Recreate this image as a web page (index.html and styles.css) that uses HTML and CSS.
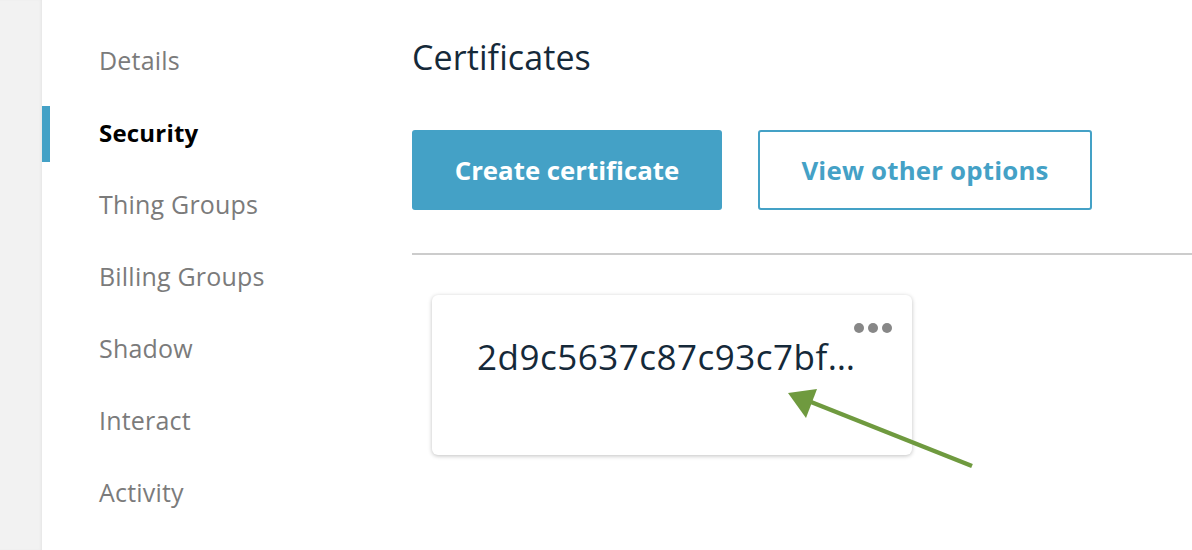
FILE: index.html
```html
<!DOCTYPE html>
<html>
<head>
<meta charset="utf-8">
<link rel="stylesheet" href="styles.css">
</head>
<body>
<div class="page">
  <div class="rail"></div>
  <nav class="nav">
    <a class="nav-item">Details</a>
    <a class="nav-item active">Security</a>
    <a class="nav-item">Thing Groups</a>
    <a class="nav-item">Billing Groups</a>
    <a class="nav-item">Shadow</a>
    <a class="nav-item">Interact</a>
    <a class="nav-item">Activity</a>
  </nav>
  <main class="main">
    <h1 class="title">Certificates</h1>
    <div class="actions">
      <button class="btn btn-primary">Create certificate</button>
      <button class="btn btn-secondary">View other options</button>
    </div>
    <hr class="divider">
    <div class="card">
      <span class="dots"><i></i><i></i><i></i></span>
      <div class="cert-id">2d9c5637c87c93c7bf…</div>
    </div>
  </main>
  <svg class="arrow" width="1192" height="550" viewBox="0 0 1192 550">
    <line x1="972" y1="466" x2="806" y2="400" stroke="#6f9a3f" stroke-width="4.5"/>
    <polygon points="788,393 817,389 806,418" fill="#6f9a3f"/>
  </svg>
</div>
</body>
</html>
```

FILE: styles.css
```css
* { box-sizing: border-box; }
html, body { margin: 0; padding: 0; background: #fff; }
body { font-family: "Open Sans", "Liberation Sans", sans-serif; }
.page { position: relative; display: flex; width: 1192px; height: 550px; overflow: hidden; }
.rail { width: 42px; flex: none; background: #f2f2f2; box-shadow: inset -2px 0 3px -1px rgba(0,0,0,0.06); }
.nav { width: 370px; flex: none; display: flex; flex-direction: column; gap: 16px; padding-top: 34px; }
.nav-item { height: 56px; display: flex; align-items: center; padding: 0 0 4px 49px; border-left: 8px solid transparent; font-size: 25px; color: #7b7b7b; letter-spacing: 0.2px; }
.nav-item.active { border-left-color: #44a1c6; color: #000; font-weight: 700; font-size: 24px; }
.main { flex: 1; display: flex; flex-direction: column; }
.title { margin: 35px 0 0 0; font-size: 34px; font-weight: 400; line-height: 44px; color: #152939; letter-spacing: 0.1px; }
.actions { display: flex; gap: 36px; margin-top: 51px; }
.btn { height: 80px; border-radius: 3px; font-family: inherit; font-size: 25.8px; font-weight: 700; cursor: pointer; letter-spacing: 0; }
.btn-primary { width: 310px; background: #44a1c6; border: none; color: #fff; }
.btn-secondary { width: 334px; background: #fff; border: 2px solid #44a1c6; color: #44a1c6; letter-spacing: 0.2px; }
.divider { margin: 43px 0 0; border: none; border-top: 2px solid #cccccc; width: 100%; }
.card { position: relative; margin: 40px 0 0 20px; width: 480px; height: 160px; background: #fff; border-radius: 6px; box-shadow: 0 1px 4px rgba(0,0,0,0.25); padding: 38px 0 0 45px; }
.cert-id { font-size: 35px; color: #152939; letter-spacing: 0.5px; line-height: 48px; }
.dots { position: absolute; right: 20px; top: 28px; display: flex; gap: 4px; }
.dots i { width: 10px; height: 10px; border-radius: 50%; background: #878787; }
.arrow { position: absolute; left: 0; top: 0; pointer-events: none; }
```
